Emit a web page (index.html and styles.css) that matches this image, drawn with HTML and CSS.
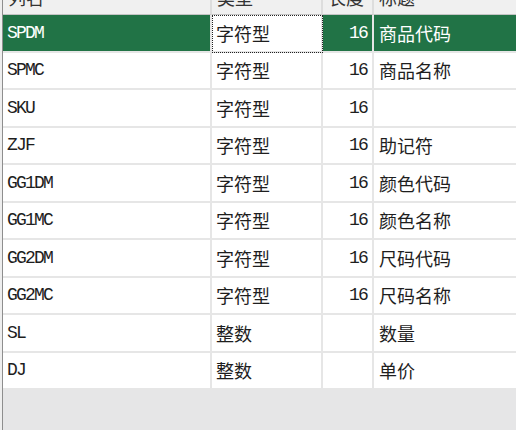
FILE: index.html
```html
<!DOCTYPE html>
<html>
<head>
<meta charset="utf-8">
<link rel="stylesheet" href="styles.css">
</head>
<body>
<div class="frame">
  <div class="grid">
    <div class="hcell"><span>列名</span></div>
    <div class="hcell"><span>类型</span></div>
    <div class="hcell"><span>长度</span></div>
    <div class="hcell last"><span>标题</span></div>

    <div class="cell lat sel">SPDM</div>
    <div class="cell cjk focus">字符型</div>
    <div class="cell lat num sel">16</div>
    <div class="cell cjk sel last">商品代码</div>

    <div class="cell lat">SPMC</div>
    <div class="cell cjk">字符型</div>
    <div class="cell lat num">16</div>
    <div class="cell cjk last">商品名称</div>

    <div class="cell lat">SKU</div>
    <div class="cell cjk">字符型</div>
    <div class="cell lat num">16</div>
    <div class="cell cjk last"></div>

    <div class="cell lat">ZJF</div>
    <div class="cell cjk">字符型</div>
    <div class="cell lat num">16</div>
    <div class="cell cjk last">助记符</div>

    <div class="cell lat">GG1DM</div>
    <div class="cell cjk">字符型</div>
    <div class="cell lat num">16</div>
    <div class="cell cjk last">颜色代码</div>

    <div class="cell lat">GG1MC</div>
    <div class="cell cjk">字符型</div>
    <div class="cell lat num">16</div>
    <div class="cell cjk last">颜色名称</div>

    <div class="cell lat">GG2DM</div>
    <div class="cell cjk">字符型</div>
    <div class="cell lat num">16</div>
    <div class="cell cjk last">尺码代码</div>

    <div class="cell lat">GG2MC</div>
    <div class="cell cjk">字符型</div>
    <div class="cell lat num">16</div>
    <div class="cell cjk last">尺码名称</div>

    <div class="cell lat">SL</div>
    <div class="cell cjk">整数</div>
    <div class="cell lat num"></div>
    <div class="cell cjk last">数量</div>

    <div class="cell lat">DJ</div>
    <div class="cell cjk">整数</div>
    <div class="cell lat num"></div>
    <div class="cell cjk last">单价</div>
  </div>
</div>
</body>
</html>
```

FILE: styles.css
```css
html, body {
  margin: 0;
  padding: 0;
}
body {
  width: 516px;
  height: 430px;
  overflow: hidden;
  background: #eeeeee;
}
.frame {
  margin-left: 2px;
  border-left: 1px solid #8e8e8e;
  height: 430px;
  background: #e6e6e7;
}
.grid {
  display: grid;
  grid-template-columns: 209px 111px 51px 1fr;
  grid-template-rows: 15px repeat(10, 37.5px);
  color: #1e1e1e;
}
.hcell {
  box-sizing: border-box;
  background: #f0f0f0;
  border-right: 2px solid #dddddd;
  border-bottom: 1px solid #c4c4c4;
  overflow: hidden;
  display: flex;
  align-items: flex-end;
  padding-left: 5px;
  font-family: "Noto Sans CJK SC", sans-serif;
  font-size: 18px;
  color: #333;
}
.hcell span {
  line-height: 18px;
  margin-bottom: 8px;
}
.hcell.last { border-right: none; }
.cell {
  box-sizing: border-box;
  background: #ffffff;
  border-right: 2px solid #e6e6e6;
  border-bottom: 2px solid #e6e6e6;
  display: flex;
  align-items: center;
  padding-left: 4px;
  white-space: nowrap;
  overflow: hidden;
}
.cell.last { border-right: none; padding-left: 5px; }
.lat {
  font-family: "Liberation Mono", monospace;
  font-size: 18px;
  letter-spacing: -1.8px;
}
.cjk {
  font-family: "Noto Sans CJK SC", sans-serif;
  font-size: 18px;
}
.num {
  justify-content: flex-end;
  padding-left: 0;
  padding-right: 5px;
}
.sel {
  background: #217346;
  color: #ffffff;
}
.focus {
  outline: 1px dotted #222;
  outline-offset: -1px;
}
```
